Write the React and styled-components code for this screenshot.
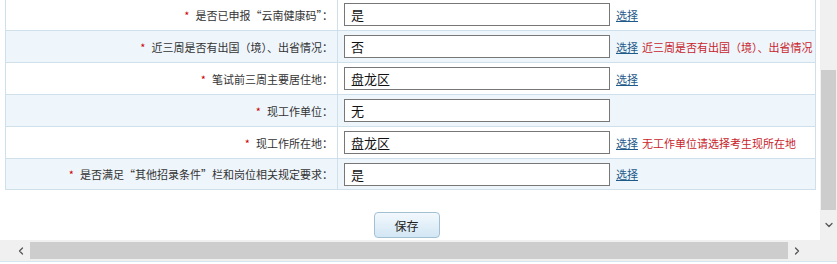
import React from 'react';
import styled, { createGlobalStyle } from 'styled-components';
import { ChevronLeft, ChevronRight, ChevronDown } from 'lucide-react';

const GlobalStyle = createGlobalStyle`
  html, body {
    margin: 0;
    padding: 0;
    background: #fff;
    overflow: hidden;
  }
  body {
    font-family: "Noto Sans CJK SC", "Liberation Sans", sans-serif;
  }
`;

const Frame = styled.div`
  width: 837px;
  height: 264px;
  display: grid;
  grid-template-columns: 1fr 17px;
  grid-template-rows: 240px 21px 3px;
  overflow: hidden;
`;

const Viewport = styled.div`
  overflow: hidden;
  padding-left: 5px;
  padding-right: 4px;
`;

const Table = styled.div`
  margin-top: -1px;
  border: 1px solid #cfe0ea;
  border-top: none;
  display: flex;
  flex-direction: column;
`;

const Row = styled.div`
  display: grid;
  grid-template-columns: 332px 1fr;
  height: 31px;
  border-bottom: 1px solid #cfe0ea;
  background: ${(p) => (p.$alt ? '#eef6fc' : '#fff')};
  &:last-child {
    border-bottom: none;
    height: 30px;
  }
`;

const Label = styled.div`
  display: flex;
  align-items: center;
  justify-content: flex-end;
  padding-right: 4px;
  border-right: 1px solid #cfe0ea;
  font-size: 11px;
  color: #333;
  white-space: nowrap;
`;

const Star = styled.span`
  color: #c00;
  margin-right: 6px;
`;

const Value = styled.div`
  display: flex;
  align-items: center;
  padding-left: 6px;
  white-space: nowrap;
  overflow: hidden;
`;

const Field = styled.div`
  box-sizing: border-box;
  width: 266px;
  height: 23px;
  border: 1px solid #777;
  background: #fff;
  font-size: 13px;
  color: #111;
  display: flex;
  align-items: center;
  padding-left: 6px;
`;

const Pick = styled.a`
  margin-left: 6px;
  font-size: 11px;
  color: #1e5a8a;
  text-decoration: underline;
`;

const Hint = styled.span`
  margin-left: 4px;
  font-size: 11px;
  color: #c8242b;
`;

const Actions = styled.div`
  display: flex;
  justify-content: center;
  padding-top: 22px;
  padding-right: 8px;
`;

const SaveButton = styled.button`
  width: 66px;
  height: 26px;
  border: 1px solid #a3c0d3;
  border-radius: 4px;
  background: linear-gradient(#f3f9fd, #d2e6f4);
  font-family: inherit;
  font-size: 12px;
  color: #222;
  padding: 0;
`;

const VBar = styled.div`
  display: grid;
  grid-template-rows: 70px 140px 1fr;
  background: #f0f0f0;
`;

const VThumb = styled.div`
  background: #cdcdcd;
  margin: 0 1px;
`;

const ArrowBox = styled.div`
  display: flex;
  align-items: center;
  justify-content: center;
  color: #555;
`;

const HBar = styled.div`
  grid-column: 1 / span 2;
  display: grid;
  grid-template-columns: 12px 18px 1fr 18px 31px;
  background: #f0f0f0;
`;

const HThumb = styled.div`
  background: #cdcdcd;
  margin: 2px 0;
`;

const BottomLine = styled.div`
  grid-column: 1 / span 2;
  background: #fff;
  border-top: 1px solid #d5e6ef;
`;

const rows = [
  { label: '是否已申报“云南健康码”：', value: '是', pick: true },
  { label: '近三周是否有出国（境）、出省情况：', value: '否', pick: true, hint: '近三周是否有出国（境）、出省情况' },
  { label: '笔试前三周主要居住地：', value: '盘龙区', pick: true },
  { label: '现工作单位：', value: '无' },
  { label: '现工作所在地：', value: '盘龙区', pick: true, hint: '无工作单位请选择考生现所在地' },
  { label: '是否满足“其他招录条件”栏和岗位相关规定要求：', value: '是', pick: true },
];

export default function App() {
  return (
    <Frame>
      <GlobalStyle />
      <Viewport>
        <Table>
          {rows.map((r, i) => (
            <Row key={i} $alt={i % 2 === 1}>
              <Label>
                <Star>*</Star>
                {r.label}
              </Label>
              <Value>
                <Field>{r.value}</Field>
                {r.pick && <Pick>选择</Pick>}
                {r.hint && <Hint>{r.hint}</Hint>}
              </Value>
            </Row>
          ))}
        </Table>
        <Actions>
          <SaveButton>保存</SaveButton>
        </Actions>
      </Viewport>
      <VBar>
        <div />
        <VThumb />
        <ArrowBox>
          <ChevronDown size={12} strokeWidth={2.5} />
        </ArrowBox>
      </VBar>
      <HBar>
        <div />
        <ArrowBox>
          <ChevronLeft size={12} strokeWidth={2.5} />
        </ArrowBox>
        <HThumb />
        <ArrowBox>
          <ChevronRight size={12} strokeWidth={2.5} />
        </ArrowBox>
        <div />
      </HBar>
      <BottomLine />
    </Frame>
  );
}
